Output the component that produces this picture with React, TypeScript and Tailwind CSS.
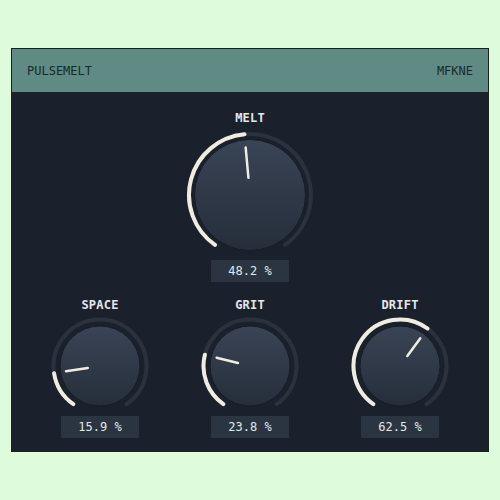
import { useId } from "react";

type KnobProps = {
  label: string;
  value: number;
  size: "lg" | "sm";
};

const START = -145;
const END = 145;

function polar(cx: number, cy: number, r: number, deg: number) {
  const rad = (deg * Math.PI) / 180;
  return [cx + r * Math.sin(rad), cy - r * Math.cos(rad)];
}

function arc(cx: number, cy: number, r: number, from: number, to: number) {
  const [x1, y1] = polar(cx, cy, r, from);
  const [x2, y2] = polar(cx, cy, r, to);
  const large = to - from > 180 ? 1 : 0;
  return `M ${x1} ${y1} A ${r} ${r} 0 ${large} 1 ${x2} ${y2}`;
}

function Knob({ label, value, size }: KnobProps) {
  const gid = useId();
  const lg = size === "lg";
  const box = lg ? 130 : 100;
  const c = box / 2;
  const ring = lg ? 61 : 46.5;
  const body = lg ? 55.5 : 40;
  const angle = START + (value / 100) * (END - START);
  const [ix1, iy1] = polar(c, c, body * 0.31, angle);
  const [ix2, iy2] = polar(c, c, body * 0.86, angle);

  return (
    <div className="flex flex-col items-center">
      <span className="text-[12px] font-bold leading-4 tracking-[0.2px] text-[#e4e7ec]">{label}</span>
      <svg width={box} height={box} viewBox={`0 0 ${box} ${box}`} className={lg ? "mt-[4px]" : "mt-[3px]"}>
        <defs>
          <linearGradient id={gid} x1="0" y1="0" x2="0" y2="1">
            <stop offset="0" stopColor="#394456" />
            <stop offset="1" stopColor="#262e3a" />
          </linearGradient>
        </defs>
        <path d={arc(c, c, ring, START, END)} fill="none" stroke="#2a323e" strokeWidth={4} strokeLinecap="round" />
        <path d={arc(c, c, ring, START, angle)} fill="none" stroke="#f0ece0" strokeWidth={4} strokeLinecap="round" />
        <circle cx={c} cy={c} r={body} fill={`url(#${gid})`} stroke="#171c25" strokeWidth={1} />
        <line x1={ix1} y1={iy1} x2={ix2} y2={iy2} stroke="#f0ece0" strokeWidth={2.5} strokeLinecap="round" />
      </svg>
      <div className="flex h-[22px] w-[78px] items-center justify-center bg-[#2b3542] text-[12px] text-[#e2e6ec]">
        {value.toFixed(1)} %
      </div>
    </div>
  );
}

export default function App() {
  return (
    <div className="min-h-[500px] bg-[#defcdc] pt-[48px] font-['DejaVu_Sans_Mono',monospace]">
      <div className="mx-[11px] border border-[#18221f] bg-[#1b212c]">
        <div className="flex h-[43px] items-center justify-between bg-[#5f8b84] px-[15px] text-[12px] text-[#172a27]">
          <span>PULSEMELT</span>
          <span>MFKNE</span>
        </div>
        <div className="flex flex-col items-center pt-[18px] pb-[13px]">
          <Knob label="MELT" value={48.2} size="lg" />
          <div className="mt-[15px] grid grid-cols-[150px_150px_150px] justify-center">
            <Knob label="SPACE" value={15.9} size="sm" />
            <Knob label="GRIT" value={23.8} size="sm" />
            <Knob label="DRIFT" value={62.5} size="sm" />
          </div>
        </div>
      </div>
    </div>
  );
}
